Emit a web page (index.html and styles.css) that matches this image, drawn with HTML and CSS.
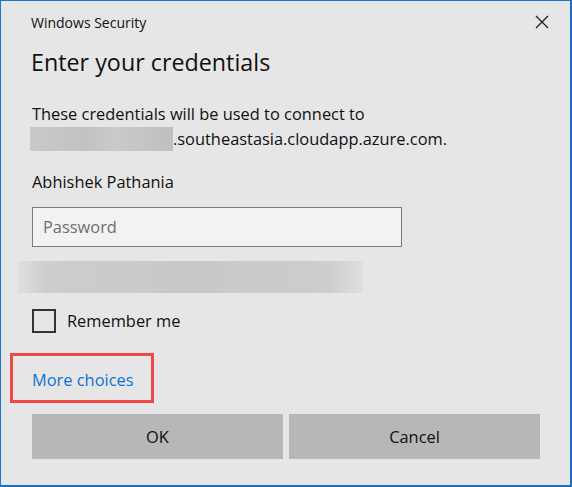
FILE: index.html
```html
<!DOCTYPE html>
<html>
<head>
<meta charset="utf-8">
<link rel="stylesheet" href="styles.css">
</head>
<body>
<div class="dialog">
  <div class="titlebar">
    <span class="title">Windows Security</span>
    <svg class="close" width="14" height="14" viewBox="0 0 14 14"><path d="M1 1 L13 13 M13 1 L1 13" stroke="#1a1a1a" stroke-width="1.2" fill="none"/></svg>
  </div>
  <h1 class="heading">Enter your credentials</h1>
  <p class="info">These credentials will be used to connect to<br><span class="redact"></span>.southeastasia.cloudapp.azure.com.</p>
  <div class="user">Abhishek Pathania</div>
  <div class="password">Password</div>
  <div class="blurbar"></div>
  <label class="remember"><span class="box"></span>Remember me</label>
  <div class="more-wrap"><a class="more">More choices</a></div>
  <div class="buttons">
    <div class="btn">OK</div>
    <div class="btn">Cancel</div>
  </div>
</div>
</body>
</html>
```
FILE: styles.css
```css
html, body { margin: 0; padding: 0; }
body { background: #e6e6e6; font-family: "Open Sans", "Noto Sans", sans-serif; color: #111; }
.dialog {
  width: 572px; height: 487px; box-sizing: border-box;
  background: #e6e6e6;
  border-left: 1px solid #1a78d2; border-top: 1px solid #1a78d2;
  border-right: 2px solid #1a6fc4; border-bottom: 2px solid #1a6fc4;
  padding: 0 30px 0 30px;
  display: flex; flex-direction: column;
}
.titlebar { display: flex; justify-content: space-between; align-items: center; height: 40px; margin-top: 0; }
.title { font-size: 14px; color: #111; margin-top: 2px; }
.close { margin-right: -9px; margin-top: 2px; }
.heading { font-size: 23.3px; font-weight: 400; margin: 1px 0 0 0; line-height: 40px; color: #111; }
.info { font-size: 16.4px; line-height: 25px; margin: 19px 0 0 1px; }
.redact { display: inline-block; width: 143px; height: 24px; vertical-align: -6px; margin-left: -2px; background: linear-gradient(90deg, #c9c9c9, #c2c2c2 40%, #cacaca 60%, #bfbfbf); }
.user { font-size: 16.4px; line-height: 25px; margin: 18px 0 0 1px; }
.password {
  margin: 13px 0 0 1px; width: 370px; height: 40px; box-sizing: border-box;
  border: 1px solid #7a7a7a; background: #f2f2f2;
  font-size: 16.4px; color: #6e6e6e; padding-left: 10px; line-height: 38px;
}
.blurbar { margin: 14px 0 0 -13px; width: 345px; height: 32px; background: linear-gradient(90deg, #e0e0e0, #cdcdcd 8%, #c8c8c8 50%, #cdcdcd 90%, #e0e0e0); }
.remember { display: flex; align-items: center; font-size: 16.4px; margin: 15px 0 0 1px; height: 25px; }
.box { width: 20px; height: 20px; border: 2px solid #333; margin-right: 11px; box-sizing: content-box; }
.more-wrap { margin: 20px 0 0 -21px; width: 144px; height: 50px; box-sizing: border-box; border: 3px solid #f04848; display: flex; align-items: center; padding-left: 19px; }
.more { color: #0a74d4; font-size: 16.4px; margin-top: 2px; }
.buttons { display: flex; gap: 6px; margin: 11px 0 0 1px; }
.btn { width: 251px; height: 45px; background: #b7b7b7; display: flex; align-items: center; justify-content: center; font-size: 16.4px; color: #111; }
```
